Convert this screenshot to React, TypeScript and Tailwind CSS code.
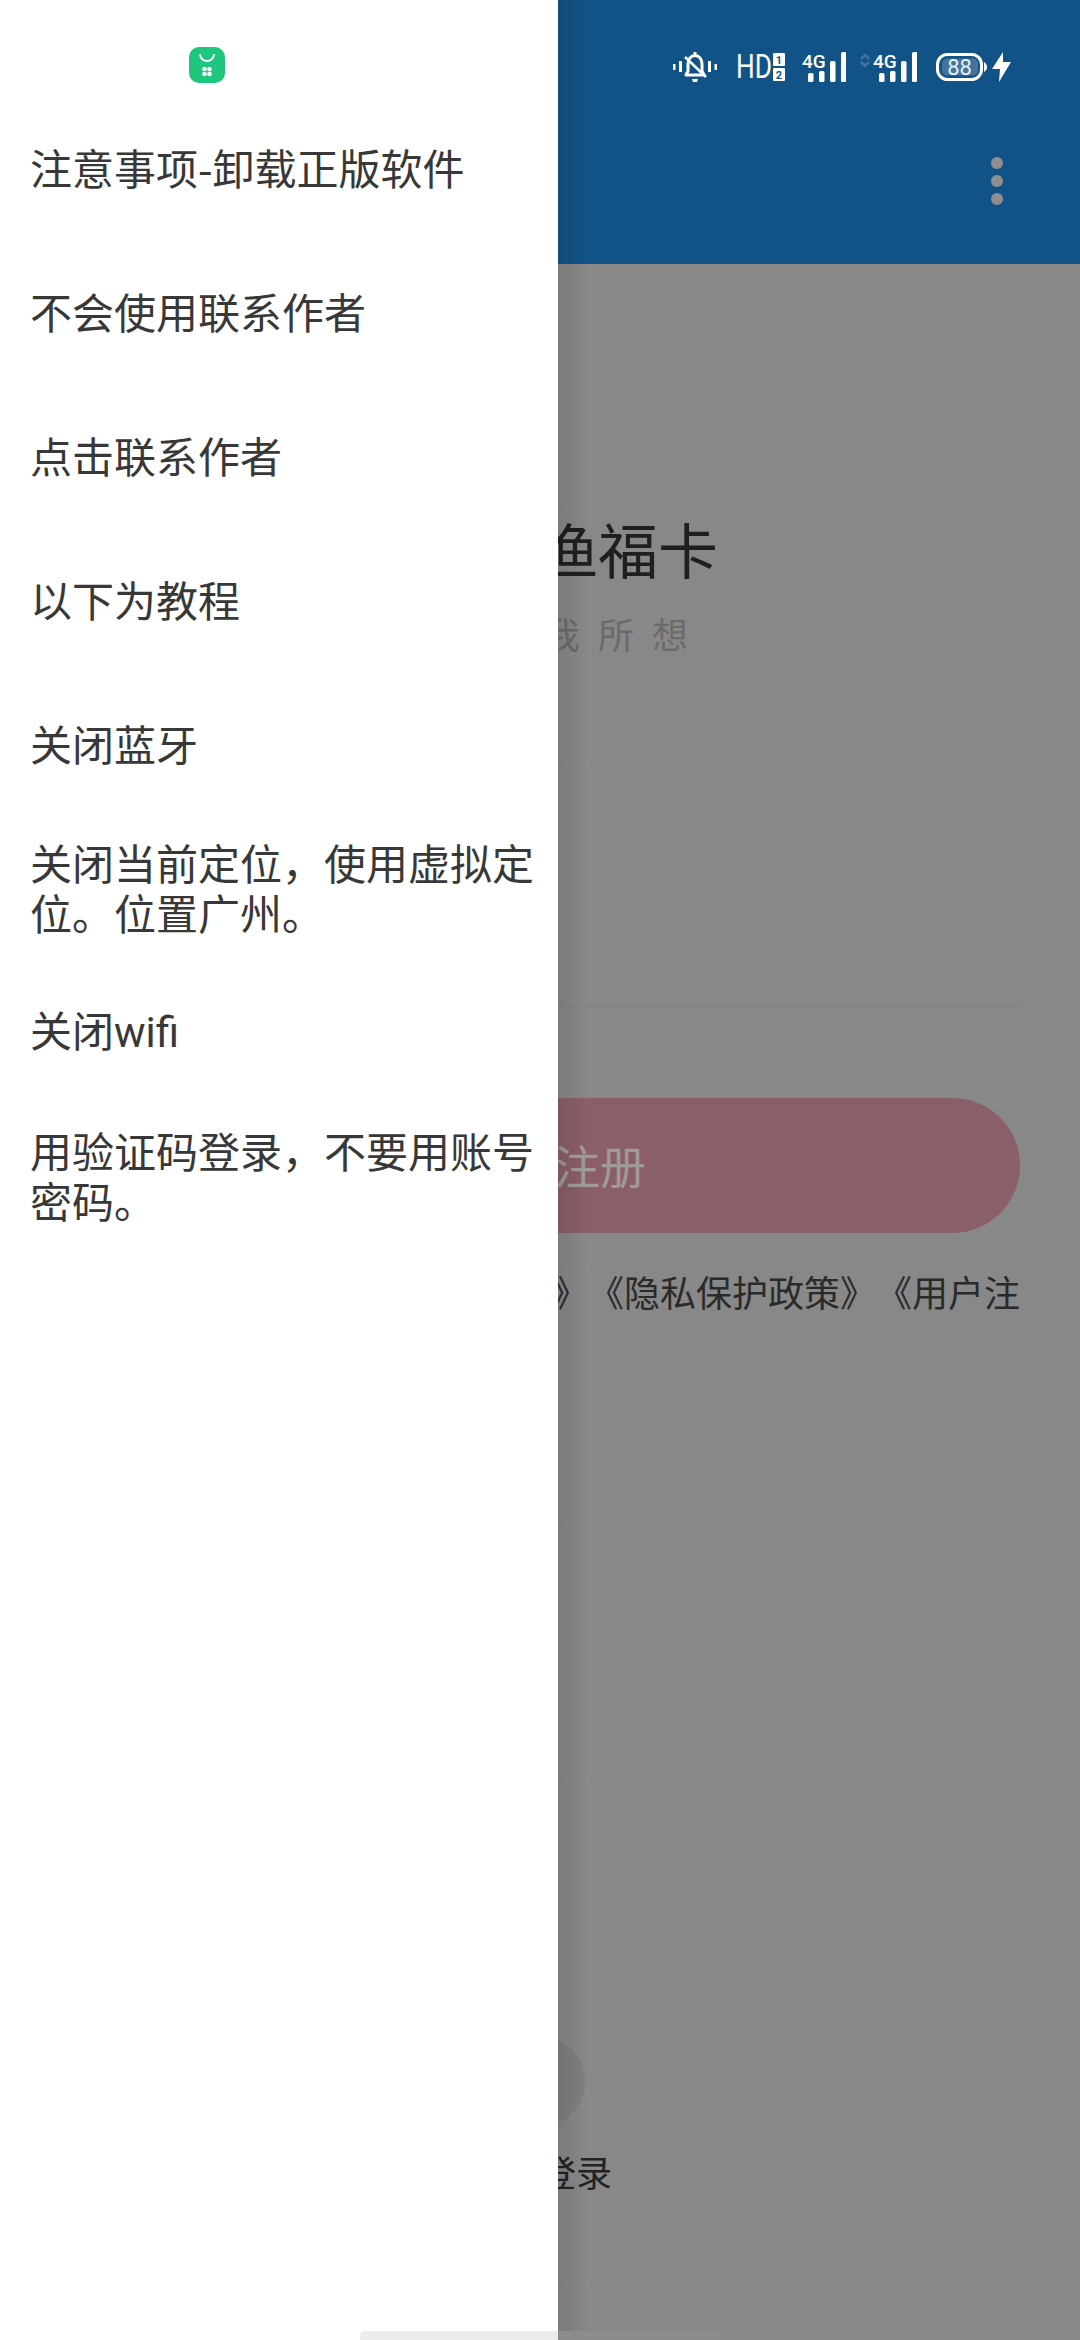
import type { ReactNode } from "react"

const menuItems: ReactNode[] = [
  "注意事项-卸载正版软件",
  "不会使用联系作者",
  "点击联系作者",
  "以下为教程",
  "关闭蓝牙",
  "关闭当前定位，使用虚拟定位。位置广州。",
  <>
    关闭<span className="font-['Roboto']">wifi</span>
  </>,
  "用验证码登录，不要用账号密码。",
]

function BellOff() {
  return (
    <svg width="44" height="32" viewBox="0 0 44 32" fill="none" className="mr-[19px]">
      <path d="M0 13h2.500v6H0zM6 10h3v11H6zM35 10h3v11h-3zM41.500 13H44v6h-2.500z" fill="#fff" />
      <path d="M22 1v3" stroke="#fff" strokeWidth="3" />
      <path d="M13 24l2-4v-7c0-5 3-8.500 7-8.500s7 3.500 7 8.500v7l2 4z" stroke="#fff" strokeWidth="3" strokeLinejoin="round" />
      <path d="M12 6l21 20" stroke="#fff" strokeWidth="2.500" />
      <path d="M19 28h6l-1 3h-4z" fill="#fff" />
    </svg>
  )
}

function HdBadge() {
  return (
    <svg width="49" height="28" viewBox="0 0 49 28" className="mr-[17px]">
      <text x="0" y="25" fontFamily="Roboto" fontSize="33" fill="#fff" textLength="36" lengthAdjust="spacingAndGlyphs">HD</text>
      <rect x="37" y="0" width="12" height="13" rx="1" fill="#fff" />
      <rect x="37" y="15" width="12" height="13" rx="1" fill="#fff" />
      <text x="43" y="11" fontFamily="Roboto" fontSize="11" fontWeight="700" textAnchor="middle" fill="#125387">1</text>
      <text x="43" y="26" fontFamily="Roboto" fontSize="11" fontWeight="700" textAnchor="middle" fill="#125387">2</text>
    </svg>
  )
}

function Signal({ className }: { className: string }) {
  return (
    <svg width="44" height="30" viewBox="0 0 44 30" className={className}>
      <text x="0" y="16" fontFamily="Roboto" fontSize="19" fontWeight="500" fill="#fff">4G</text>
      {[
        [6, 21, 9],
        [17, 19, 11],
        [28, 9, 21],
        [39, 0, 30],
      ].map(([x, y, h]) => (
        <rect key={x} x={x} y={y} width="5.500" height={h} rx="1.500" fill="#fff" />
      ))}
    </svg>
  )
}

function DataArrows() {
  return (
    <svg width="10" height="15" viewBox="0 0 10 15" fill="none" className="mr-[3px] mb-[14px]">
      <path d="M1 6l4-4 4 4M1 9l4 4 4-4" stroke="#3f729e" strokeWidth="2.500" />
    </svg>
  )
}

function Battery() {
  return (
    <svg width="51" height="28" viewBox="0 0 51 28" fill="none" className="mr-[5px]">
      <rect x="1.500" y="1.500" width="44" height="25" rx="10" stroke="#fff" strokeWidth="3" />
      <rect x="6" y="5.500" width="36" height="17" rx="5" fill="#44749e" />
      <path d="M48 9c2 1 3 3 3 5s-1 4-3 5z" fill="#fff" />
      <text x="23.500" y="21.500" fontFamily="Roboto" fontSize="22" textAnchor="middle" fill="#e8eff5">88</text>
    </svg>
  )
}

function Bolt() {
  return (
    <svg width="19" height="30" viewBox="0 0 19 30">
      <path d="M11 0L0 17h8L7 30l12-20h-8z" fill="#fff" />
    </svg>
  )
}

function StoreLogo() {
  return (
    <svg width="36" height="36" viewBox="0 0 36 36">
      <rect width="36" height="36" rx="10" fill="#1fc77e" />
      <path d="M11 8c1 4 4 6 7 6s6-2 7-6" stroke="#fff" strokeWidth="2" fill="none" strokeLinecap="round" />
      <circle cx="15.500" cy="22" r="2.300" fill="#fff" />
      <circle cx="20.500" cy="22" r="2.300" fill="#fff" />
      <circle cx="15.500" cy="27" r="2.300" fill="#fff" />
      <circle cx="20.500" cy="27" r="2.300" fill="#fff" />
    </svg>
  )
}

export default function App() {
  return (
    <div className="relative h-[2340px] w-[1080px] overflow-hidden bg-[#888888] font-['Noto_Sans_CJK_SC','Noto_Sans',sans-serif] [text-spacing-trim:space-all]">
      {/* dimmed page behind the drawer */}
      <header className="h-[264px] bg-[#125387]">
        <div className="flex items-center pl-[673px] pt-[51px]">
          <BellOff />
          <HdBadge />
          <Signal className="mr-[14px]" />
          <DataArrows />
          <Signal className="mr-[19px]" />
          <Battery />
          <Bolt />
        </div>
        <div className="mt-[74px] flex flex-col items-end gap-[6px] pr-[77px]">
          <span className="size-3 rounded-full bg-[#8f8f8f]" />
          <span className="size-3 rounded-full bg-[#8f8f8f]" />
          <span className="size-3 rounded-full bg-[#8f8f8f]" />
        </div>
      </header>

      <main className="flex flex-col px-[60px]">
        <h1 className="mt-[244px] pr-[302px] text-right text-[60px] leading-[80px] font-normal text-[#1f1f1f]">渔福卡</h1>
        <p className="mt-[25px] pr-[314px] text-right text-[36px] leading-[40px] tracking-[18px] text-[#6b6b6b]">我所想</p>
        <div className="mt-[353px] h-px bg-[#808080]" />
        <button className="mt-[91px] flex h-[135px] items-center justify-end rounded-full bg-[#8b5f67] pr-[374px] pb-[3px] text-[46px] text-[#a09a9b]">注册</button>
        <p className="mt-[33px] text-right text-[36px] leading-[50px] whitespace-nowrap text-[#2a2a2a]">》《隐私保护政策》《用户注</p>
        <div className="mt-[721px] ml-[435px] size-[90px] rounded-full bg-[#7f7f7f]" />
        <p className="mt-[19px] pr-[408px] text-right text-[36px] leading-[50px] text-[#222222]">登录</p>
      </main>

      <div className="absolute inset-y-0 left-[558px] w-[30px] bg-gradient-to-r from-black/10 to-transparent" />

      {/* drawer */}
      <aside className="absolute inset-y-0 left-0 w-[558px] bg-white">
        <div className="h-[95px] pt-[47px] pl-[189px]">
          <StoreLogo />
        </div>
        {menuItems.map((item, i) => (
          <div key={i} className="flex h-[144px] items-center pr-[20px] pl-[30px] text-[42px] leading-[50px] text-[#383838]">
            <span>{item}</span>
          </div>
        ))}
      </aside>

      <div className="absolute bottom-0 left-[360px] flex h-[9px] w-[360px] overflow-hidden rounded-t-[5px]">
        <div className="w-[198px] bg-[#ececec]" />
        <div className="w-[162px] bg-[#8c8c8c]" />
      </div>
    </div>
  )
}
